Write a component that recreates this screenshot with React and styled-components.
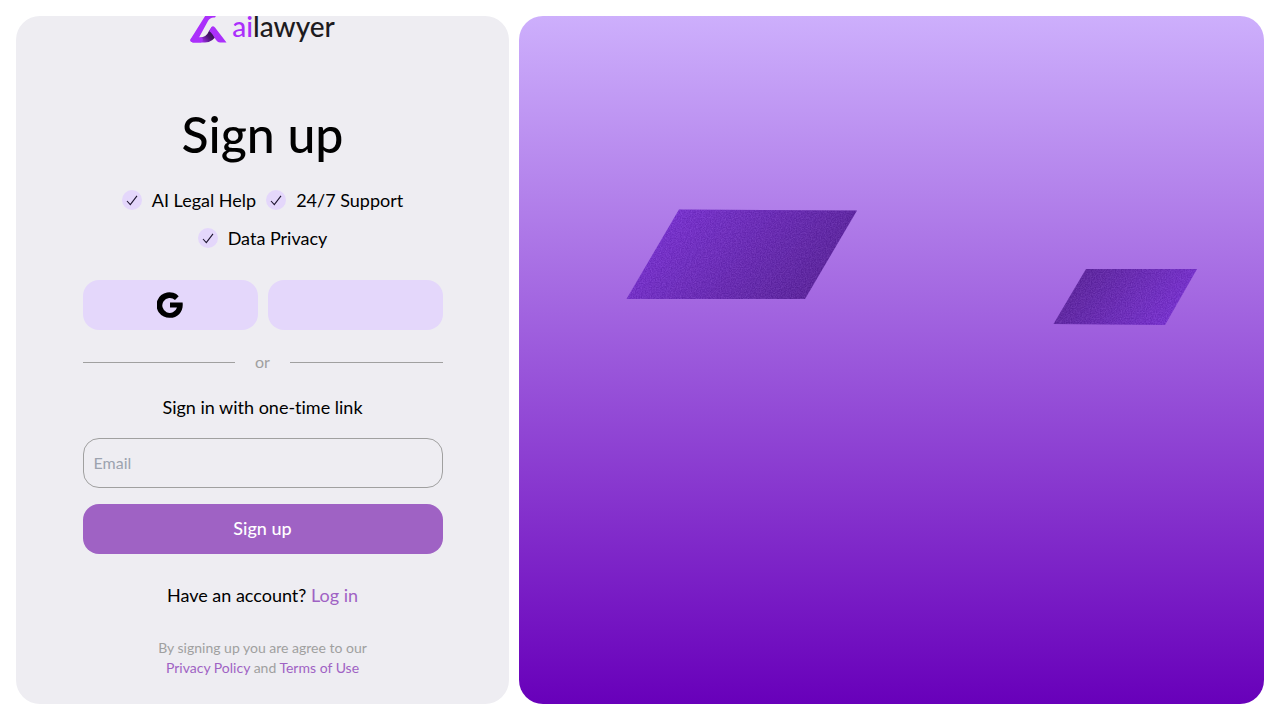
import React from "react";
import styled, { createGlobalStyle } from "styled-components";

const GlobalStyle = createGlobalStyle`
  *, *::before, *::after { box-sizing: border-box; }
  body {
    margin: 0;
    background: #ffffff;
    color: #000000;
    font-family: Lato, "Liberation Sans", sans-serif;
    font-size: 18px;
    font-variant-ligatures: none;
    line-height: 22px;
  }
`;

const Page = styled.main`
  display: grid;
  grid-template-columns: 493fr 745fr;
  gap: 10px;
  height: 100vh;
  padding: 16px;
`;

const FormPanel = styled.section`
  display: flex;
  flex-direction: column;
  align-items: center;
  justify-content: flex-end;
  min-width: 0;
  padding: 0 16px 26px;
  overflow: hidden;
  border-radius: 24px;
  background: #eeedf2;
`;

const Content = styled.div`
  display: flex;
  flex-direction: column;
  width: 100%;
  max-width: 360px;
`;

const Logo = styled.a`
  display: flex;
  align-items: flex-end;
  align-self: center;
  gap: 5px;
  height: 40px;
  margin-bottom: 62px;
  color: #1d1b20;
  font-size: 28px;
  font-weight: 500;
  line-height: 36px;
  text-decoration: none;
`;

const LogoAccent = styled.span`
  color: #ab30fb;
`;

const Title = styled.h1`
  margin: 0 0 24px;
  font-size: 50px;
  font-weight: 500;
  line-height: 56px;
  text-align: center;
`;

const Benefits = styled.ul`
  display: flex;
  flex-wrap: wrap;
  justify-content: center;
  gap: 10px;
  margin: 0 0 28px;
  padding: 0;
  list-style: none;
`;

const Benefit = styled.li`
  display: flex;
  align-items: center;
  gap: 10px;
  height: 28px;
`;

const Providers = styled.div`
  display: grid;
  grid-template-columns: 1fr 1fr;
  gap: 10px;
  margin-bottom: 20px;
`;

const ProviderButton = styled.button`
  display: flex;
  align-items: center;
  justify-content: center;
  height: 50px;
  border: 0;
  border-radius: 16px;
  background: #e4d7fb;
`;

const Divider = styled.div`
  display: flex;
  align-items: center;
  gap: 20px;
  margin-bottom: 22px;
  color: #a0a0a0;
  font-size: 16px;
  line-height: 24px;

  &::before,
  &::after {
    content: "";
    flex: 1;
    height: 1px;
    background: #a0a0a0;
  }
`;

const Form = styled.form`
  display: flex;
  flex-direction: column;
  margin-bottom: 30px;
`;

const EmailLabel = styled.label`
  margin-bottom: 20px;
  text-align: center;
`;

const EmailInput = styled.input`
  width: 100%;
  height: 50px;
  margin-bottom: 16px;
  padding: 0 10px 2px;
  border: 1px solid #a0a0a0;
  border-radius: 16px;
  background: transparent;
  font-family: inherit;
  font-size: 16px;

  &::placeholder {
    color: #9ca3af;
    opacity: 1;
  }
`;

const SubmitButton = styled.button`
  height: 50px;
  padding: 0 10px 2px;
  border: 0;
  border-radius: 16px;
  background: #9f62c4;
  color: #ffffff;
  font-family: inherit;
  font-size: 18px;
  font-weight: 500;
`;

const Account = styled.p`
  margin: 0 0 32px;
  text-align: center;
`;

const Legal = styled.p`
  margin: 0;
  color: #a0a0a0;
  font-size: 14px;
  line-height: 20px;
  text-align: center;
`;

const TextLink = styled.a`
  color: #9f62c4;
  text-decoration: none;
`;

const ArtPanel = styled.section`
  min-width: 0;
  overflow: hidden;
  border-radius: 24px;
  background: linear-gradient(180deg, #cdaffc 0%, #6800ba 100%);
`;

const Art = styled.svg`
  display: block;
  width: 100%;
  height: 100%;
`;

const LogoMark = () => (
  <svg width="37" height="40" viewBox="0 0 37 40" aria-hidden="true">
    <defs>
      <linearGradient id="fold" x1="11" y1="38" x2="22" y2="28" gradientUnits="userSpaceOnUse">
        <stop offset="0" stopColor="#ab30fb" />
        <stop offset="0.6" stopColor="#4b1670" />
        <stop offset="1" stopColor="#35104f" />
      </linearGradient>
    </defs>
    <path d="M17 9 Q19 6 22 7 L27 10 L25 13.5 Q20 13 18 17 L9 33.5 L3 38.5 Q-1 38 1 34.5 Z" fill="#ab30fb" />
    <path d="M9 33.5 Q16 34 19 27 L22 23 L27 30 Q23 38.5 15 38.5 H3 L6 33.5 Z" fill="url(#fold)" />
    <path d="M1 34.5 L5 32.5 L9 33.5 H12 Q14 37 11 38.5 H3 Q-1 38 1 34.5 Z" fill="#ab30fb" />
    <path d="M19 27 L21.5 23 Q23 21.5 25 23.5 L36.5 38.5 H30 Q28 38.5 26 36 L22.5 30.5 Q21 28 19 27 Z" fill="#ab30fb" />
  </svg>
);

const CheckIcon = () => (
  <svg width="20" height="20" viewBox="0 0 20 20" aria-hidden="true">
    <circle cx="10" cy="10" r="10" fill="#e4d7fb" />
    <path d="M5 11 L8.3 14.6 L15 5.8" fill="none" stroke="#1d1530" strokeWidth="1.1" />
  </svg>
);

const GoogleIcon = () => (
  <svg width="26" height="26" viewBox="0 0 26 26" aria-hidden="true">
    <path
      d="M21.7 4.3 L18 8 A7.5 7.5 0 1 0 20 15.5 H13 V10.4 H25.6 C26.8 19 21 25.8 13 25.8 A12.8 12.8 0 1 1 21.7 4.3 Z"
      fill="#000000"
    />
  </svg>
);

const Parallelograms = () => (
  <Art viewBox="0 0 745 688" preserveAspectRatio="xMidYMid slice" aria-hidden="true">
    <defs>
      <linearGradient id="large" x1="150" y1="180" x2="290" y2="300" gradientUnits="userSpaceOnUse">
        <stop offset="0" stopColor="#7d36d4" />
        <stop offset="1" stopColor="#582592" />
      </linearGradient>
      <linearGradient id="small" x1="562" y1="245" x2="652" y2="316" gradientUnits="userSpaceOnUse">
        <stop offset="0" stopColor="#5a2694" />
        <stop offset="1" stopColor="#7d36d4" />
      </linearGradient>
      <filter id="grain" x="0" y="0" width="100%" height="100%" colorInterpolationFilters="sRGB">
        <feTurbulence type="fractalNoise" baseFrequency="0.8" numOctaves="2" seed="4" />
        <feColorMatrix values="1 0 0 0 -0.06  1 0 0 0 -0.3  1 0 0 0 0.25  0 0 0 0 0.16" />
        <feComposite in2="SourceGraphic" operator="in" result="noise" />
        <feMerge>
          <feMergeNode in="SourceGraphic" />
          <feMergeNode in="noise" />
        </feMerge>
      </filter>
    </defs>
    <polygon points="160,193.5 338,194.5 286,283 107.5,283" fill="url(#large)" filter="url(#grain)" />
    <polygon points="567,253 678,253 646,309 534.5,308" fill="url(#small)" filter="url(#grain)" />
  </Art>
);

export default function App() {
  return (
    <>
      <GlobalStyle />
      <Page>
        <FormPanel>
          <Content>
            <Logo href="#home">
              <LogoMark />
              <span>
                <LogoAccent>ai</LogoAccent>lawyer
              </span>
            </Logo>
            <Title>Sign up</Title>
            <Benefits>
              {["AI Legal Help", "24/7 Support", "Data Privacy"].map((label) => (
                <Benefit key={label}>
                  <CheckIcon />
                  {label}
                </Benefit>
              ))}
            </Benefits>
            <Providers>
              <ProviderButton type="button" aria-label="Continue with Google">
                <GoogleIcon />
              </ProviderButton>
              <ProviderButton type="button" aria-label="Continue with another provider" />
            </Providers>
            <Divider>or</Divider>
            <Form onSubmit={(event) => event.preventDefault()}>
              <EmailLabel htmlFor="email">Sign in with one-time link</EmailLabel>
              <EmailInput id="email" type="email" placeholder="Email" />
              <SubmitButton type="submit">Sign up</SubmitButton>
            </Form>
            <Account>
              Have an account? <TextLink href="#login">Log in</TextLink>
            </Account>
            <Legal>
              By signing up you are agree to our
              <br />
              <TextLink href="#privacy">Privacy Policy</TextLink> and{" "}
              <TextLink href="#terms">Terms of Use</TextLink>
            </Legal>
          </Content>
        </FormPanel>
        <ArtPanel>
          <Parallelograms />
        </ArtPanel>
      </Page>
    </>
  );
}
